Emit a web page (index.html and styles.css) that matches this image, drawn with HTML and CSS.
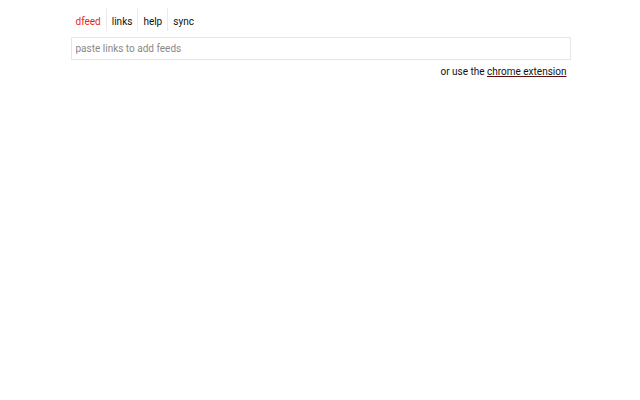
FILE: index.html
```html
<!DOCTYPE html>
<html>
<head>
<meta charset="utf-8">
<link rel="stylesheet" href="styles.css">
</head>
<body>
<div class="page">
  <nav class="nav">
    <a class="nav-item brand">dfeed</a>
    <a class="nav-item">links</a>
    <a class="nav-item">help</a>
    <a class="nav-item">sync</a>
  </nav>
  <input class="feed-input" type="text" placeholder="paste links to add feeds">
  <div class="ext">or use the <a class="ext-link">chrome extension</a></div>
</div>
</body>
</html>
```
FILE: styles.css
```css
html, body {
  margin: 0;
  padding: 0;
  background: #fff;
}
body {
  font-family: Roboto, "Liberation Sans", sans-serif;
  font-size: 10px;
  color: #111;
}
.page {
  width: 500px;
  margin: 0 auto;
  padding: 0 0 0 1px;
}
.nav {
  display: flex;
  margin-top: 8px;
}
.nav-item {
  display: block;
  height: 23px;
  line-height: 28px;
  padding: 0 5px;
  border-left: 1px solid #ebebeb;
  color: #111;
}
.nav-item.brand {
  border-left: none;
  color: #e8241a;
}
.feed-input {
  display: block;
  box-sizing: border-box;
  width: 500px;
  height: 23px;
  margin: 6px 0 0 0;
  padding: 0 4px;
  border: 1px solid #e6e6e6;
  font-family: Roboto, "Liberation Sans", sans-serif;
  font-size: 10px;
  color: #111;
  outline: none;
}
.feed-input::placeholder {
  color: #888;
}
.ext {
  text-align: right;
  padding-right: 4px;
  margin-top: 5px;
  line-height: 14px;
}
.ext-link {
  color: #111;
  text-decoration: underline;
  text-decoration-color: #5a1010;
}
```
